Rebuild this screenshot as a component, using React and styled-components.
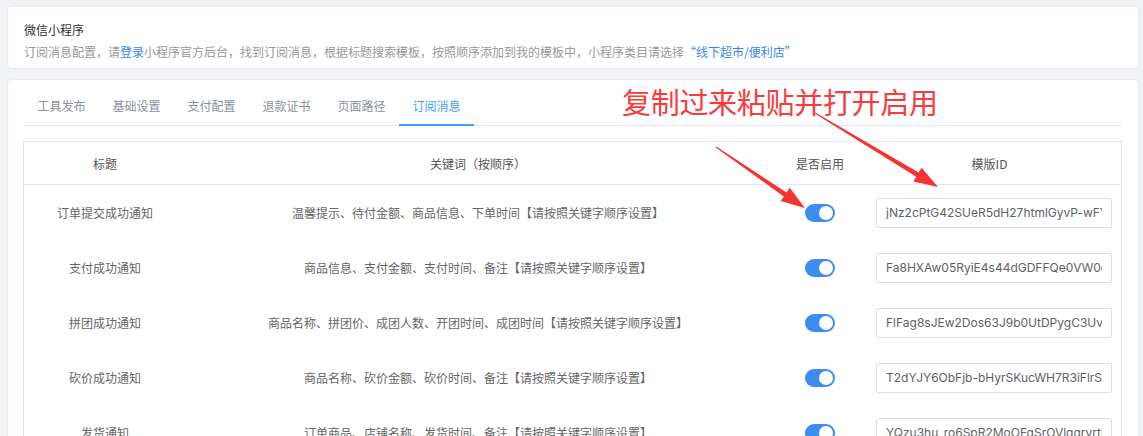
import React from 'react'
import styled, { createGlobalStyle } from 'styled-components'

const Global = createGlobalStyle`
  html, body { margin: 0; padding: 0; background: #f0f2f5; }
  body {
    font-family: "Noto Sans CJK SC", "Noto Sans", sans-serif;
    font-size: 12px;
    color: #606266;
  }
`

const Page = styled.div`
  position: relative;
  height: 436px;
  overflow: hidden;
  padding: 6px 4px 0 7px;
  box-sizing: border-box;
  display: flex;
  flex-direction: column;
  gap: 10px;
`

const Card = styled.section`
  position: relative;
  background: #fff;
  border: 1px solid #e8eaee;
  border-radius: 4px;
  padding: ${p => p.$pad};
  flex-shrink: 0;
`

const Title = styled.div`
  color: #333;
  font-size: 12px;
  line-height: 20px;
  margin-bottom: 2px;
`

const Hint = styled.div`
  color: #999;
  font-size: 12px;
  line-height: 20px;
  a {
    color: #3a86f0;
    text-decoration: none;
  }
`

const Tabs = styled.div`
  display: flex;
  height: 37px;
  border-bottom: 1px solid #e4e7ed;
`

const Tab = styled.div`
  width: 75px;
  text-align: center;
  line-height: 37px;
  font-size: 12px;
  color: ${p => (p.$active ? '#409eff' : '#8a909b')};
  border-bottom: 2px solid ${p => (p.$active ? '#409eff' : 'transparent')};
  margin-bottom: -1px;
  box-sizing: content-box;
  height: 37px;
  margin-top: -1px;
`

const Table = styled.div`
  margin-top: 15px;
  margin-left: -1px;
  border: 1px solid #e4e7ed;
  border-bottom: none;
`

const Row = styled.div`
  display: grid;
  grid-template-columns: 162px 584px 100px 1fr;
  align-items: center;
  height: ${p => (p.$head ? '42px' : '55px')};
  border-bottom: ${p => (p.$head ? '1px solid #e4e7ed' : 'none')};
  color: ${p => (p.$head ? '#555' : '#666')};
  font-size: 12px;
`

const Cell = styled.div`
  text-align: center;
  white-space: nowrap;
  padding: ${p => p.$pad || '0'};
`

const Toggle = styled.span`
  display: inline-block;
  position: relative;
  width: 30px;
  height: 18px;
  border-radius: 9px;
  background: #3d8cf2;
  vertical-align: middle;
  &::after {
    content: '';
    position: absolute;
    top: 2px;
    right: 2px;
    width: 14px;
    height: 14px;
    border-radius: 50%;
    background: #fff;
  }
`

const IdInput = styled.input`
  display: block;
  width: 236px;
  height: 30px;
  box-sizing: border-box;
  border: 1px solid #dcdfe6;
  border-radius: 2px;
  padding: 0 9px;
  font-family: Inter, "Open Sans", sans-serif;
  font-size: 12px;
  color: #606266;
  outline: none;
  background: #fff;
`

const Note = styled.div`
  position: absolute;
  left: 614px;
  top: 7px;
  font-size: 29px;
  line-height: 1;
  color: #fa3b3b;
  white-space: nowrap;
  letter-spacing: -0.3px;
`

const Overlay = styled.svg`
  position: absolute;
  left: 0;
  top: 0;
  pointer-events: none;
`

const tabs = ['工具发布', '基础设置', '支付配置', '退款证书', '页面路径', '订阅消息']

const rows = [
  ['订单提交成功通知', '温馨提示、待付金额、商品信息、下单时间【请按照关键字顺序设置】', 'jNz2cPtG42SUeR5dH27htmlGyvP-wFYcQk8'],
  ['支付成功通知', '商品信息、支付金额、支付时间、备注【请按照关键字顺序设置】', 'Fa8HXAw05RyiE4s44dGDFFQe0VW0cTk2'],
  ['拼团成功通知', '商品名称、拼团价、成团人数、开团时间、成团时间【请按照关键字顺序设置】', 'FlFag8sJEw2Dos63J9b0UtDPygC3UvIk'],
  ['砍价成功通知', '商品名称、砍价金额、砍价时间、备注【请按照关键字顺序设置】', 'T2dYJY6ObFjb-bHyrSKucWH7R3iFlrSTq'],
  ['发货通知', '订单商品、店铺名称、发货时间、备注【请按照关键字顺序设置】', 'YQzu3hu_ro6SpR2MoOFqSrOVlqqryrtk'],
]

function arrow(x0, y0, x1, y1) {
  const dx = x1 - x0
  const dy = y1 - y0
  const len = Math.hypot(dx, dy)
  const ux = dx / len
  const uy = dy / len
  const nx = -uy
  const ny = ux
  const H = 24
  const bx = x1 - ux * H
  const by = y1 - uy * H
  const pts = [
    [x0 + nx * 0.6, y0 + ny * 0.6],
    [bx + nx * 2.4, by + ny * 2.4],
    [bx + nx * 8, by + ny * 8],
    [x1, y1],
    [bx - nx * 8, by - ny * 8],
    [bx - nx * 2.4, by - ny * 2.4],
    [x0 - nx * 0.6, y0 - ny * 0.6],
  ]
  return pts.map(p => p.map(v => v.toFixed(1)).join(',')).join(' ')
}

export default function App() {
  return (
    <>
      <Global />
      <Page>
        <Card $pad="13px 16px 6px">
          <Title>微信小程序</Title>
          <Hint>
            订阅消息配置，请<a href="#">登录</a>小程序官方后台，找到订阅消息，根据标题搜索模板，按照顺序添加到我的模板中，小程序类目请选择<a href="#">“线下超市/便利店”</a>
          </Hint>
        </Card>
        <Card $pad="8px 16px 0">
          <Tabs>
            {tabs.map((t, i) => (
              <Tab key={t} $active={i === tabs.length - 1}>{t}</Tab>
            ))}
          </Tabs>
          <Table>
            <Row $head>
              <Cell>标题</Cell>
              <Cell>关键词（按顺序）</Cell>
              <Cell>是否启用</Cell>
              <Cell $pad="0 12px 0 0">模版ID</Cell>
            </Row>
            {rows.map(([title, keys, id]) => (
              <Row key={title}>
                <Cell>{title}</Cell>
                <Cell>{keys}</Cell>
                <Cell><Toggle /></Cell>
                <Cell $pad="0 0 0 6px">
                  <IdInput readOnly value={id} />
                </Cell>
              </Row>
            ))}
          </Table>
          <Note>复制过来粘贴并打开启用</Note>
        </Card>
        <Overlay width="1143" height="436" viewBox="0 0 1143 436">
          <polygon points={arrow(716, 147, 805, 208)} fill="#f53333" />
          <polygon points={arrow(815, 113, 938, 187)} fill="#f53333" />
        </Overlay>
      </Page>
    </>
  )
}
